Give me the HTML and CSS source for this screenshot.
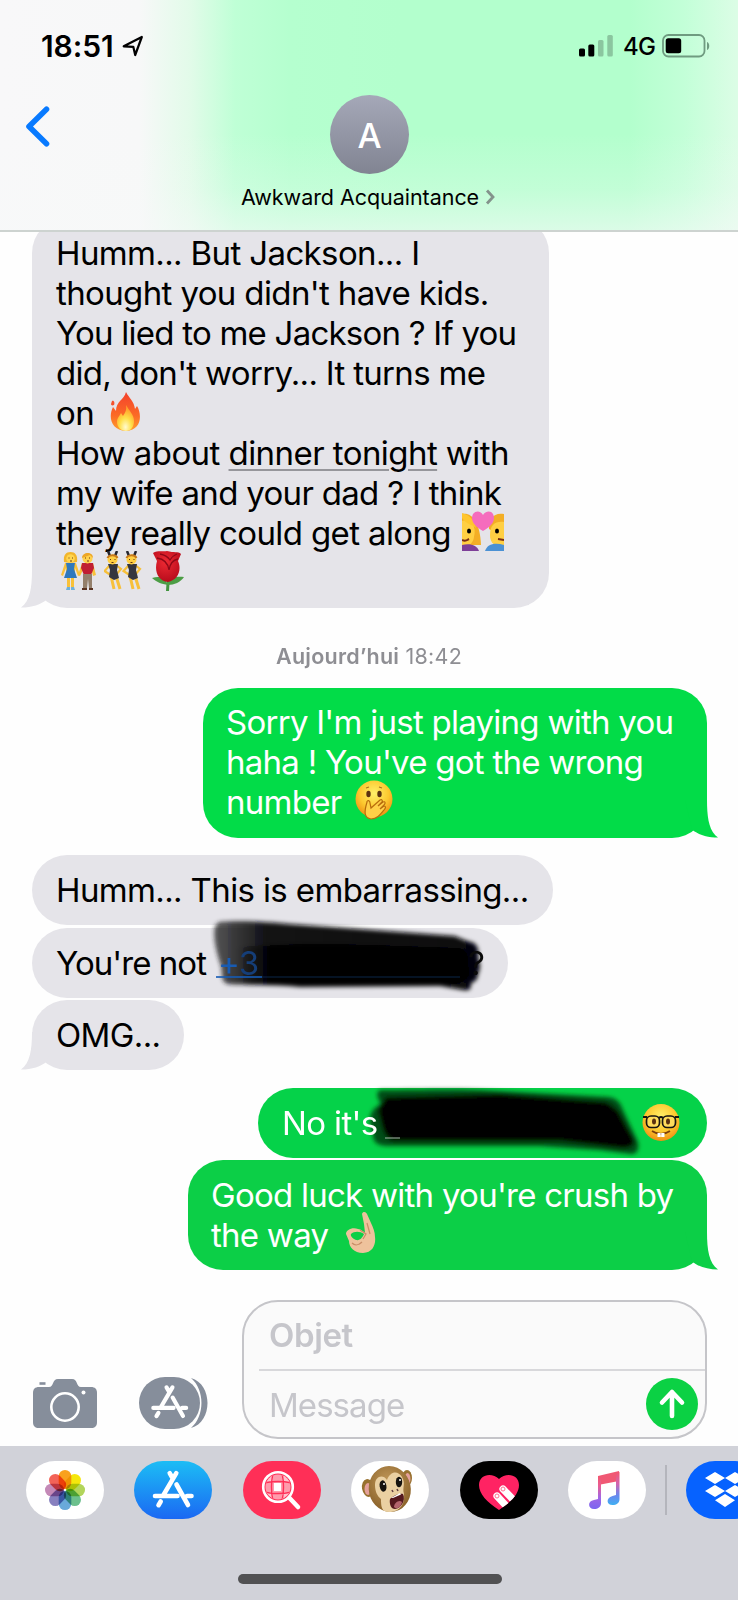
FILE: index.html
```html
<!DOCTYPE html>
<html lang="fr">
<head>
<meta charset="utf-8">
<title>Messages</title>
<link rel="stylesheet" href="styles.css">
</head>
<body>
<svg class="defs" width="0" height="0">
  <defs>
    <linearGradient id="fire" x1="0" y1="0" x2="0" y2="1"><stop offset="0" stop-color="#f4412c"/><stop offset=".6" stop-color="#fb6a26"/><stop offset="1" stop-color="#ffa02c"/></linearGradient>
    <radialGradient id="flame" cx=".5" cy=".85" r=".7"><stop offset="0" stop-color="#fffbd0"/><stop offset=".5" stop-color="#ffe04a"/><stop offset="1" stop-color="#ffa32b"/></radialGradient>
    <radialGradient id="face" cx=".5" cy=".35" r=".65"><stop offset="0" stop-color="#fff06a"/><stop offset=".6" stop-color="#fdc92f"/><stop offset="1" stop-color="#ef8f13"/></radialGradient>
    <radialGradient id="rose" cx=".45" cy=".35" r=".7"><stop offset="0" stop-color="#ee2a33"/><stop offset="1" stop-color="#b3091a"/></radialGradient>
    <linearGradient id="store" x1="0" y1="0" x2="0" y2="1"><stop offset="0" stop-color="#1cbdf5"/><stop offset="1" stop-color="#1b68f3"/></linearGradient>
    <linearGradient id="music" x1="0" y1="0" x2="0" y2="1"><stop offset="0" stop-color="#f2566f"/><stop offset=".3" stop-color="#ea5c92"/><stop offset=".65" stop-color="#a067e6"/><stop offset="1" stop-color="#7b66f0"/></linearGradient>
    <linearGradient id="music2" x1="0" y1="0" x2="0" y2="1"><stop offset="0" stop-color="#f2566f"/><stop offset=".35" stop-color="#d463ae"/><stop offset=".7" stop-color="#6a86ee"/><stop offset="1" stop-color="#3fb0f2"/></linearGradient>
    <radialGradient id="fur" cx=".5" cy=".35" r=".65"><stop offset="0" stop-color="#c39a5c"/><stop offset="1" stop-color="#8a6229"/></radialGradient>
    <linearGradient id="ink" x1="0" y1="0" x2="1" y2="0"><stop offset="0" stop-color="#222" stop-opacity=".75"/><stop offset=".18" stop-color="#101012" stop-opacity=".97"/><stop offset="1" stop-color="#060607"/></linearGradient>
    <linearGradient id="core" x1="0" y1="0" x2="1" y2="0"><stop offset="0" stop-color="#040405" stop-opacity="0"/><stop offset=".15" stop-color="#040405"/></linearGradient>
    <filter id="soft" x="-10%" y="-20%" width="120%" height="140%"><feGaussianBlur stdDeviation="2.200"/></filter>
    <g id="storeA" fill="none" stroke="#fff" stroke-width="4.600" stroke-linecap="round">
      <path d="M3.300-16.800-9.500 5M-3.300-16.800-.500-12M3.500-5.500 15 15M-18 6H4.500M14 6h4.500M-12.300 11.500-14.500 15.200"/>
    </g>
    <symbol id="tail" viewBox="0 0 34 38"><path d="M12 0C12 18 10 31 1 37.600C12 37.600 21 34.500 27 29.500L34 0Z"/></symbol>
    <g id="woman"><path d="M7 22h3v15H7zM11 22h3v15h-3z" fill="#f9c13a"/><path d="M1 24 5 12h11l4 12-2 1-3-8v9H6v-9l-3 8z" fill="#f9c13a"/><path d="M6 12h9l-1 6 3 9H4l3-9z" fill="#2f78bd"/><path d="M4 11C3 4 6 1 10.500 1S18 4 17 11c-3 1-10 1-13 0" fill="#f2b52c"/><circle cx="10.500" cy="7.500" r="4.300" fill="#ffd54e"/><path d="M8.500 7h1m2.500 0h1m-3 3h2" stroke="#6c3b14"/><path d="M7 36h3v3H6zM11 36h3l1 3h-4z" fill="#6eb1dc"/></g>
    <g id="dancer"><path d="M7 25 10 38M12 25l4 13" stroke="#f7c03a" stroke-width="3"/><path d="M6 14 .500 20l6 4M12 14l5 4-5 6" fill="none" stroke="#f7c03a" stroke-width="2.200"/><path d="M4 13h10l-1 6 2 8-5 2-5-3 1-7z" fill="#35363e"/><path d="M4 0l2 5M13 0l-2 5" stroke="#252630" stroke-width="2.500"/><circle cx="8.500" cy="8.500" r="5" fill="#ffcf42"/><path d="M3.500 7c1-3 8-4 10 0" stroke="#c7791b" stroke-width="2" fill="none"/><path d="M6 8.500h1m3.500 0h1m-4 3h2" stroke="#60350f"/></g>
  </defs>
</svg>

<div class="phone">
  <header class="header">
    <div class="status">
      <span class="time">18:51</span>
      <svg class="loc" width="22" height="22" viewBox="0 0 22 22"><path d="M1.700 11.300 19.800 2 13.200 20 11.300 11.800Z" fill="none" stroke="#000" stroke-width="2.200" stroke-linejoin="round"/></svg>
      <svg class="signal" width="35" height="22" viewBox="0 0 35 22"><rect x="0" y="13.500" width="6" height="8" rx="1.500"/><rect x="9.300" y="9.500" width="6" height="12" rx="1.500"/><g opacity=".22"><rect x="19" y="5" width="5.500" height="16.500" rx="1.500"/><rect x="28.300" y="0" width="5.500" height="21.500" rx="1.500"/></g></svg>
      <span class="net">4G</span>
      <svg class="battery" width="49" height="24" viewBox="0 0 49 24"><rect x="1" y="1" width="41.500" height="21.500" rx="5.500" fill="none" stroke="#6f9b80" stroke-width="1.800"/><rect x="3.700" y="4.200" width="15.500" height="15" rx="2.500"/><path d="M45 8c3 1 3 7 0 8z" fill="#6f9b80"/></svg>
    </div>
    <div class="nav">
      <svg class="back" width="25" height="44" viewBox="0 0 25 44"><path d="M21.500 4.300 4 21.500 21.500 38.800" fill="none" stroke="#087aff" stroke-width="5.600" stroke-linecap="round" stroke-linejoin="round"/></svg>
      <div class="avatar">A</div>
    </div>
    <div class="contact"><span class="name">Awkward Acquaintance</span><svg width="10" height="16" viewBox="0 0 10 16"><path d="M2 1.500 8 8 2 14.500" fill="none" stroke="#84938c" stroke-width="2.800"/></svg></div>
  </header>

  <main class="chat">
    <div class="bubble in first">Humm... But Jackson... I<br>thought you didn't have kids.<br><span class="tight">You lied to me Jackson ? If you</span><br><span class="snug">did, don't worry... It turns me</span><br>on <svg class="emoji e-fire" width="34" height="39" viewBox="0 0 34 39"><path d="M17 0C20 6 25 9 26 17l2-3c5 8 5 24-11 25C2 38-1 25 4 15l3 4C7 9 15 8 17 0Z" fill="url(#fire)"/><path d="M3 9c2-1 3 2 2 4-2 1-3 0-3-1z" fill="#f4512c"/><path d="M17 13c3 6 8 9 8 16 0 6-3 10-8 10s-9-4-9-9c0-4 2-5 4-9l2 3c2-3 4-6 3-11Z" fill="url(#flame)"/></svg><br><span class="wide">How about <span class="date">dinner tonight</span> with</span><br><span class="snug">my wife and your dad ? I think</span><br>they really could get along <svg class="emoji e-kiss" width="42" height="40" viewBox="0 0 42 40"><path d="M0 3c10-2 18 8 19 31H0z" fill="#f3ae25"/><path d="M0 10c8-2 15 4 12 16-1 7-6 10-12 9z" fill="#ffcf43"/><path d="M0 7c5 7 10 6 14 10-1-8-7-13-14-15z" fill="#ffc62e"/><path d="M0 34c8-2 15 0 17 6H0z" fill="#7e3f98"/><path d="M42 3C32 1 26 8 27 18l3 2h12z" fill="#f3ae25"/><path d="M42 11c-9-1-14 3-14 13s7 12 14 11z" fill="#ffcf43"/><path d="M23 40c2-7 10-9 19-6v6z" fill="#4b91d4"/><ellipse cx="7" cy="20" rx="2" ry="2.500"/><ellipse cx="35" cy="20" rx="2" ry="2.500"/><path d="M0 29c4 2 5 0 7-1M42 29l-6-1" stroke="#7a2d14" stroke-width="2" fill="none"/><path d="M21 20C12 15 8 9 11 3c3-4 8-3 10 1 2-4 8-5 10-1 3 6-1 12-10 17Z" fill="#f56cbd"/></svg><br><svg class="emoji e-pair" width="36" height="40" viewBox="0 0 36 40"><use href="#woman"/><g transform="translate(17 0)"><path d="M1 24 5 12h11l3 12-3 1-2-8H7l-4 8z" fill="#f9c13a"/><path d="M5 12h11l1 5-3 7H7l-3-7z" fill="#c01e32"/><path d="M6 23h9v14h-3l-1-9-1 9H6z" fill="#94806c"/><circle cx="10.500" cy="7.500" r="5" fill="#ffd04a"/><path d="M5 7C5 1 16 0 16 7l-3-3z" fill="#eda626"/><path d="M8 7h1m3 0h1m-3 3h2" stroke="#6c3b14"/><path d="M5 37h5v2H5zm7 0h4v2h-4z" fill="#593322"/></g></svg><svg class="emoji e-bunny" width="38" height="40" viewBox="0 0 38 40"><use href="#dancer"/><use href="#dancer" x="19"/></svg><svg class="emoji e-rose" width="34" height="40" viewBox="0 0 34 40"><path d="M15 24h3l-1 16h-3z" fill="#42953f"/><path d="M0 27c7-2 12-1 15 5 4-6 10-7 17-6-3 5-10 8-16 8C9 33 5 31 0 27Z" fill="#4c9d45"/><path d="M1 2c5-3 10-1 14-2 7 2 11 0 14 3l-3 7c4 9 0 19-10 21C6 30 2 20 5 10Z" fill="url(#rose)"/><path d="M5 7c7 1 11 5 12 12 1-7 4-10 9-11M8 3c5 1 8 3 10 6 2-3 4-5 7-6" fill="none" stroke="#8f0817" stroke-width="1.300"/></svg><svg class="tail left"><use href="#tail"/></svg></div>

    <p class="stamp"><b>Aujourd’hui</b> 18:42</p>

    <div class="bubble out g1">Sorry I'm just playing with you<br>haha ! You've got the wrong<br>number <svg class="emoji e-oops" width="38" height="40" viewBox="0 0 38 40"><circle cx="19" cy="19" r="18.500" fill="url(#face)"/><ellipse cx="13.500" cy="14" rx="2.200" ry="3.300" fill="#5b3210"/><ellipse cx="24.500" cy="14" rx="2.200" ry="3.300" fill="#5b3210"/><path d="M11 8l3-1m10 0 3 1" stroke="#a9701a" stroke-width="1.300"/><path d="M12 22c0-2 3-2 3 1l1 5 9-8c2-1 3 1 2 2l-4 4 5-4c2-1 3 1 1 3l-4 4 4-3c2 0 2 2 0 4-4 5-7 9-13 9-7-1-7-7-4-17Z" fill="#ffd047" stroke="#b86c0c" stroke-width="1.200"/></svg><svg class="tail right"><use href="#tail"/></svg></div>

    <div class="bubble in one w1">Humm... This is embarrassing...</div>
    <div class="bubble in one w2"><span class="lead">You're not </span><span class="phone-no"><i class="n1">+</i><i class="n2">3</i></span><span class="q">?</span>
      <svg class="ink ink-a" width="280" height="82" viewBox="210 915 280 82"><g filter="url(#soft)"><path d="M219 922C240 920 270 922 290 924L455 936Q466 941 474 943 480 948 478 958 482 966 478 974 478 981 471 983 472 992 463 990L440 986 300 987C270 984 245 986 228 984 220 982 223 975 221 966Q212 940 215 926Z" fill="url(#ink)"/><path d="M236 948C290 942 340 944 380 945L455 948Q470 948 468 965 474 980 455 984H236Z" fill="url(#core)"/></g><path d="M216 977H262" stroke="#155bb5" stroke-width="2" opacity=".8"/><path d="M262 977H460" stroke="#0d2a50" stroke-width="2" opacity=".45"/></svg></div>
    <div class="bubble in one w3">OMG...<svg class="tail left"><use href="#tail"/></svg></div>

    <div class="bubble out one g2"><span class="over">No it's</span><svg class="ink ink-b" width="290" height="82" viewBox="360 1082 290 82"><g filter="url(#soft)"><path d="M380 1090C420 1090 440 1089 480 1090L608 1097Q619 1098 622 1108L638 1142Q640 1155 630 1154L600 1150 540 1146H388Q372 1146 373 1134 364 1112 381 1104 374 1093 380 1090Z" fill="#054d17"/><path d="M386 1097 500 1094 606 1102 Q618 1108 622 1118L634 1140Q634 1149 622 1148L560 1141H392Q384 1136 382 1126L378 1110Z" fill="#030503"/></g><path d="M385 1138h15" stroke="#aab9ad" stroke-width="1"/></svg><svg class="emoji e-nerd" width="38" height="40" viewBox="0 0 38 40"><circle cx="19" cy="19.500" r="18.500" fill="url(#face)"/><g fill="#ffdc5c" stroke="#181511" stroke-width="1.700"><rect x="4.500" y="13" width="13" height="11.500" rx="4.500"/><rect x="20.500" y="13" width="13" height="11.500" rx="4.500"/></g><path d="M1 14h4m28 0h4M17 15q2-2 4 0" stroke="#181511" stroke-width="2" fill="none"/><ellipse cx="12" cy="18.500" rx="2" ry="3" fill="#5b3210"/><ellipse cx="26" cy="18.500" rx="2" ry="3" fill="#5b3210"/><path d="M10 28q9 6 18 0" fill="none" stroke="#7b3f0d" stroke-width="1.800"/><path d="M15.500 30h3.200v4h-3.200zm3.700 0h3.300v4h-3.300z" fill="#fff"/></svg></div>
    <div class="bubble out g3">Good luck with you're crush by<br>the way <svg class="emoji e-ok" width="32" height="41" viewBox="0 0 32 41"><path fill-rule="evenodd" d="M17 2c1-3 4-2 5 0l4 9c2 4 4 9 4 14 1 7-2 16-12 16C9 41 4 35 4 29L1 22c0-4 6-7 12-5 3 0 6 3 7 4l-1-9ZM6 22c-1 2 2 5 5 6 4 1 7-3 8-6-4-3-10-3-13 0Z" fill="#eec29c"/><path d="M22 11l3 11m-10-4 6 4-3 5M7 31c3 3 7 2 10-1" fill="none" stroke="#c88d67" stroke-width="1.200"/></svg><svg class="tail right"><use href="#tail"/></svg></div>
  </main>

  <section class="compose">
    <svg class="camera" width="64" height="50" viewBox="0 0 64 50"><path d="M6 8h10c5 0 3-8 9-8h14c6 0 4 8 9 8h10c4 0 6 2 6 6v29c0 4-2 6-6 6H6c-4 0-6-2-6-6V14c0-4 2-6 6-6Z" fill="#868e9b"/><path d="M6.500 4.500h6" stroke="#868e9b" stroke-width="2.600"/><circle cx="32" cy="28" r="13.700" fill="none" stroke="#fff" stroke-width="2.600"/><circle cx="50.500" cy="13.500" r="2" fill="#fff"/></svg>
    <svg class="apps" width="70" height="52" viewBox="0 0 70 52"><path d="M52 1C63 4 68.500 15 68.500 26S63 48 52 51C66 39 66 13 52 1Z" fill="#868e9b"/><rect width="61" height="52" rx="26" fill="#868e9b"/><use href="#storeA" transform="translate(30.500 25.500) scale(.9)"/></svg>
    <div class="field">
      <div class="subject">Objet</div>
      <div class="message"><span>Message</span><svg class="send" width="52" height="52" viewBox="0 0 52 52"><circle cx="26" cy="26" r="26" fill="#0bd144"/><path d="M26 38V14M16 24.500 26 14l10 10.500" fill="none" stroke="#fff" stroke-width="4.600" stroke-linecap="round" stroke-linejoin="round"/></svg></div>
    </div>
  </section>

  <footer class="dock">
    <div class="strip">
      <svg class="app white" viewBox="-39 -29 78 58"><g class="petals"><rect x="-6.300" y="-20" width="12.600" height="19" rx="6.300" fill="#f9a11d"/><rect x="-6.300" y="-20" width="12.600" height="19" rx="6.300" fill="#f5e70c" transform="rotate(45)"/><rect x="-6.300" y="-20" width="12.600" height="19" rx="6.300" fill="#b2d55b" transform="rotate(90)"/><rect x="-6.300" y="-20" width="12.600" height="19" rx="6.300" fill="#6cc08d" transform="rotate(135)"/><rect x="-6.300" y="-20" width="12.600" height="19" rx="6.300" fill="#69a9da" transform="rotate(180)"/><rect x="-6.300" y="-20" width="12.600" height="19" rx="6.300" fill="#8780bf" transform="rotate(225)"/><rect x="-6.300" y="-20" width="12.600" height="19" rx="6.300" fill="#c489b7" transform="rotate(270)"/><rect x="-6.300" y="-20" width="12.600" height="19" rx="6.300" fill="#f36358" transform="rotate(315)"/></g></svg>
      <svg class="app" viewBox="-39 -29 78 58"><rect x="-39" y="-29" width="78" height="58" fill="url(#store)"/><use href="#storeA"/></svg>
      <svg class="app red" viewBox="-39 -29 78 58"><clipPath id="lens"><circle cx="-4" cy="-3" r="12.500"/></clipPath><g clip-path="url(#lens)"><path d="M-20-20h32v32h-32z" fill="#ff9bac"/><path d="M-8-7h7v8h-7z" fill="#fff"/><path d="M-20-18h11v10h-11zM0-18h11v10H0zM-20 2h11v12h-11zM0 2h11v12H0z" fill="#ffc3cd"/><path d="M-9-17q-3 14 0 28M0-17q3 14 0 28M-18-7q14-3 28 0M-18 2q14 3 28 0" stroke="#ff2f57" stroke-width="1.400" fill="none"/></g><circle cx="-4" cy="-3" r="14.800" fill="none" stroke="#fff" stroke-width="2.600"/><path d="M7.500 8 16 17" stroke="#fff" stroke-width="4.500" stroke-linecap="round"/></svg>
      <svg class="app white" viewBox="-39 -29 78 58"><ellipse cx="-22" cy="-2" rx="6" ry="9" fill="#98712f" transform="rotate(-10 -22 -2)"/><ellipse cx="-22" cy="-1" rx="3.500" ry="6" fill="#e4a09b"/><ellipse cx="17" cy="-12" rx="5" ry="8" fill="#98712f"/><ellipse cx="17.500" cy="-11" rx="3" ry="6" fill="#e4a09b"/><ellipse cx="0" cy="-1" rx="21" ry="23" fill="url(#fur)" transform="rotate(-12)"/><path d="M-15-5c0-9 8-11 12-5 3-9 11-10 15-3 4 7 0 10 2 17 1 10-4 17-13 18C-9 23-9 16-9 9c-4-3-6-8-6-14Z" fill="#ead0a2"/><ellipse cx="-7" cy="-4" rx="3.400" ry="5.700" fill="#15120f" transform="rotate(-10 -7 -4)"/><ellipse cx="9" cy="-8" rx="3.200" ry="5.300" fill="#15120f"/><circle cx="-6" cy="-6" r="1" fill="#fff"/><circle cx="10" cy="-10" r="1" fill="#fff"/><path d="M2 0l1 2m4-3 1 2" stroke="#644" stroke-width="1.600"/><path d="M0 9C3 6 9 3 13 4c3 6-2 15-8 15-4 0-6-5-5-10Z" fill="#55191f"/><path d="M4 17c0-4 5-8 8-5-1 5-5 8-8 5Z" fill="#b3646d"/><path d="M1 8l9-5 1 1.500-8 3.500z" fill="#fff"/></svg>
      <svg class="app black" viewBox="-39 -29 78 58"><clipPath id="heart"><path d="M0 20C-12 12-20 4-20-5c0-11 13-13 20-6 7-7 20-5 20 6C20 4 12 12 0 20Z"/></clipPath><g clip-path="url(#heart)"><path d="M-20-20h40v40h-40z" fill="#ff2363"/><g stroke-width="7.200" stroke="#fff" stroke-linecap="round"><path d="M-2 6 12 21M4-1 24 20"/></g><g fill="none" stroke="#ff6f91"><circle cx="-2" cy="6" r="2"/><circle cx="4" cy="-1" r="2"/></g></g></svg>
      <svg class="app white" viewBox="-39 -29 78 58"><path d="M-9-14 12-19V-9L-9-5Z" fill="#f05874"/><path d="M-9-14h3V13c0 4-3 6-7 6-6 0-7-8 0-9l4-1Z" fill="url(#music)"/><path d="M9-18h3.500V9c0 4-3 6-7 6-6 0-7-7 0-9L9 5Z" fill="url(#music2)"/></svg>
      <i class="sep"></i>
      <svg class="app blue" viewBox="-39 -29 78 58"><path d="m-10-18 10 6-10 6-10-6zM10-18l10 6-10 6-10-6zM-10-5 0 1l-10 6-10-6zM10-5l10 6-10 6L0 1zM0 4l10 6.300L0 17l-10-6.700z" fill="#fff"/></svg>
    </div>
    <div class="home"></div>
  </footer>
</div>
</body>
</html>
```
FILE: styles.css
```css
* { box-sizing: border-box; }
body { margin: 0; background: #fff; font-family: Inter, "Liberation Sans", sans-serif; color: #000; }
svg { display: block; flex: none; }
.defs { position: absolute; }
.phone { width: 738px; height: 1600px; overflow: hidden; display: flex; flex-direction: column; background: #fefefe; }

.header {
  position: relative; z-index: 2; flex: none; height: 232px; border-bottom: 2px solid #cdd3d0;
  background:
    linear-gradient(180deg, rgba(248,248,250,0) 58%, rgba(247,249,249,.22) 82%, rgba(247,249,249,.58) 100%),
    linear-gradient(90deg, #f8f8f9 0, #f7f8f8 140px, #e2fbe9 190px, #bfffd6 235px, #b5ffcf 290px, #b3ffcd 400px, #b3ffcd 630px, #c3ffd8 685px, #dcfde6 738px);
}
.status { display: flex; height: 94px; padding: 34px 27px 0 41px; align-items: flex-start; }
.time { width: 81px; font-size: 30px; line-height: 24px; font-weight: 600; letter-spacing: -.1px; white-space: nowrap; }
.loc { margin-top: 1px; }
.signal { margin: 1px 9px 0 auto; }
.net { width: 39px; font-size: 24px; line-height: 25px; font-weight: 500; letter-spacing: -.8px; }
.nav { display: grid; grid-template-columns: 330px 79px; }
.back { margin: 11px 0 0 25px; }
.avatar { margin-top: 1px; width: 79px; height: 79px; border-radius: 50%; background: linear-gradient(#a5a8b8, #818492); color: #fff; font-size: 34px; font-weight: 500; line-height: 81px; text-align: center; }
.contact { display: flex; align-items: center; padding: 10px 0 0 241px; gap: 7px; height: 36px; }
.name { font-size: 21.5px; line-height: 26px; width: 237px; white-space: nowrap; letter-spacing: -.05px; }

.chat { position: relative; flex: none; height: 1048px; margin-top: -14px; display: flex; flex-direction: column; align-items: flex-start; }
.bubble { position: relative; flex: none; padding: 15px 0 15px 24px; border-radius: 35px; font-size: 33px; line-height: 40px; letter-spacing: -.63px; white-space: nowrap; }
.tight { letter-spacing: -.77px; }
.snug { letter-spacing: -.69px; }
.wide { letter-spacing: -.56px; }
.in { margin-left: 32px; background: #e5e4e9; }
.out { align-self: flex-end; margin-right: 31px; color: #fff; }
.first { width: 517px; height: 390px; }
.date { text-decoration: underline; text-decoration-color: #96969b; text-decoration-thickness: 2px; text-underline-offset: 4px; }
.stamp { margin: 35px 0 0; width: 738px; height: 26px; text-align: center; font-size: 21.5px; line-height: 26px; color: #8e8e93; letter-spacing: .25px; }
.stamp b { font-weight: 600; }
.g1 { margin-top: 19px; width: 504px; height: 150px; background: #02dc48; letter-spacing: -.74px; padding: 14px 0 16px 23px; }
.w1 { margin-top: 17px; width: 521px; }
.w2 { margin-top: 3px; width: 476px; display: flex; white-space: pre; }
.w3 { margin-top: 2px; width: 152px; }
.one { height: 70px; }
.g2 { margin-top: 18px; width: 449px; background: #05d249; display: flex; z-index: 1; }
.g3 { margin-top: 2px; width: 519px; height: 110px; background: #0ccf47; letter-spacing: -.74px; padding-left: 23px; }
.lead { width: 162px; letter-spacing: -.95px; }
.phone-no { width: 250px; position: relative; z-index: 2; }
.phone-no i { font-style: normal; }
.n1 { color: #175bb3; }
.n2 { color: #153e78; }
.q, .over { position: relative; z-index: 2; }
.w2 .q { color: #0a0a0a; }
.ink { position: absolute; z-index: 1; }
.ink-a { left: 178px; top: -13px; }
.ink-b { left: 102px; top: -6px; }
.tail { position: absolute; width: 34px; height: 38px; bottom: 0; }
.left { left: -12px; fill: #e5e4e9; }
.right { right: -12px; transform: scaleX(-1); }
.g1 .right { fill: #02dc48; }
.g3 .right { fill: #0ccf47; }
.emoji { display: inline-block; vertical-align: -6px; margin-top: -6px; margin-bottom: -2px; position: relative; top: -2px; }
.e-fire { margin-left: 6px; }
.e-kiss { margin-left: 2px; }
.e-pair { margin-left: 4px; }
.e-bunny { margin-left: 8px; }
.e-rose { margin-left: 10px; }
.e-oops { margin-left: 5px; }
.e-ok { margin-left: 8px; }
.e-nerd { margin: 0 0 0 auto; left: -27px; top: 0; }

.compose { flex: none; height: 180px; padding: 34px 31px 0 33px; display: flex; align-items: flex-start; }
.camera { margin-top: 79px; }
.apps { margin: 77px 0 0 42px; }
.field { margin-left: auto; width: 465px; height: 139px; border: 2px solid #c5c5c9; border-radius: 36px; background: #fafafa; color: #c6c6cb; font-size: 33px; padding-left: 15px; }
.subject { height: 69px; padding: 13px 0 0 10px; line-height: 40px; font-weight: 600; border-bottom: 2px solid #d8d8db; letter-spacing: -.4px; }
.message { display: flex; justify-content: space-between; height: 66px; padding: 7px 7px 0 10px; line-height: 54px; letter-spacing: -.95px; }

.dock { flex: 1; background: #d1d2d9; }
.strip { display: flex; height: 74px; padding: 15px 0 0 26px; }
.app { width: 78px; height: 58px; border-radius: 29px; margin-right: 30.400px; }
.white { background: #fff; }
.red { background: #ff2f57; }
.black { background: #000; }
.blue { background: #0662ff; }
.petals rect { mix-blend-mode: multiply; }
.sep { flex: none; width: 2px; height: 50px; margin: 4px 19px 0 -11px; background: #b4b5bc; }
.home { margin: 54px 0 0 238px; width: 264px; height: 10px; border-radius: 5px; background: #515153; }
```
